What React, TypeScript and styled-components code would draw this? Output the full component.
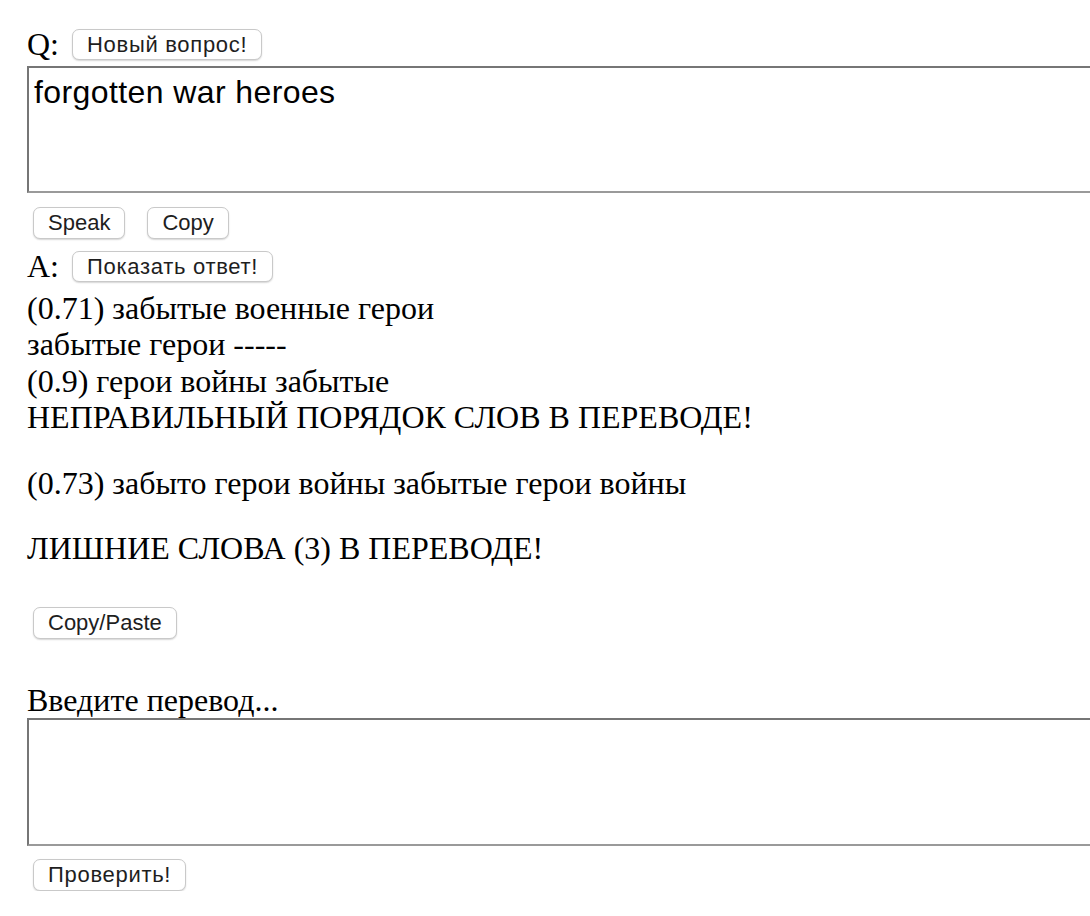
import React from "react";
import styled, { createGlobalStyle } from "styled-components";

const GlobalStyle = createGlobalStyle`
  html, body {
    margin: 0;
    padding: 0;
    overflow: hidden;
    background: #ffffff;
  }
  body {
    font-family: "Liberation Serif", "Times New Roman", serif;
    color: #000;
  }
`;

const Page = styled.main`
  display: flex;
  flex-direction: column;
  align-items: flex-start;
  padding: 26px 0 0 27px;
  font-size: 32px;
  line-height: 36.3px;
`;

const LabelRow = styled.div<{ $mt?: number }>`
  display: flex;
  align-items: center;
  gap: 13px;
  height: 37px;
  margin-top: ${(p) => p.$mt ?? 0}px;
`;

const Label = styled.span`
  font-family: "Liberation Serif", "Times New Roman", serif;
  font-size: 32px;
  line-height: 37px;
`;

const Button = styled.button<{ $mt?: number; $ml?: number; $cyr?: boolean }>`
  height: 32px;
  padding: 0 14px;
  margin-top: ${(p) => p.$mt ?? 0}px;
  margin-left: ${(p) => p.$ml ?? 0}px;
  font-family: "Liberation Sans", Arial, sans-serif;
  font-size: 22px;
  letter-spacing: ${(p) => (p.$cyr ? "0.7px" : "0")};
  color: #1e1e1e;
  background: #ffffff;
  border: 1px solid #c9c9c9;
  border-radius: 7px;
  box-shadow: 0 1px 1.5px rgba(0, 0, 0, 0.16);
  cursor: pointer;
`;

const SmallButton = styled(Button)`
  height: 31px;
`;

const TextArea = styled.textarea<{ $mt?: number; $h?: number }>`
  box-sizing: border-box;
  width: 1120px;
  height: ${(p) => p.$h ?? 127}px;
  margin-top: ${(p) => p.$mt ?? 0}px;
  padding: 6px 5px;
  font-family: "Liberation Sans", Arial, sans-serif;
  font-size: 32px;
  letter-spacing: 0.4px;
  color: #000;
  border-style: solid;
  border-width: 2px;
  border-color: #767676 #9a9a9a #9a9a9a #767676;
  resize: none;
  outline: none;
  background: #fff;
`;

const ButtonRow = styled.div`
  display: flex;
  gap: 22px;
  margin-top: 14px;
  margin-left: 6px;
`;

const Line = styled.div<{ $mt?: number }>`
  font-size: 32px;
  line-height: 36.3px;
  margin-top: ${(p) => p.$mt ?? 0}px;
  white-space: nowrap;
`;

const Prompt = styled.div`
  margin-top: 44px;
  font-size: 32px;
  line-height: 35.6px;
`;

export default function App() {
  return (
    <>
      <GlobalStyle />
      <Page>
        <LabelRow>
          <Label>Q:</Label>
          <SmallButton $cyr>Новый вопрос!</SmallButton>
        </LabelRow>
        <TextArea $mt={3} $h={127} defaultValue="forgotten war heroes" />
        <ButtonRow>
          <Button>Speak</Button>
          <Button>Copy</Button>
        </ButtonRow>
        <LabelRow $mt={9}>
          <Label>A:</Label>
          <SmallButton $cyr>Показать ответ!</SmallButton>
        </LabelRow>
        <Line $mt={5}>(0.71) забытые военные герои</Line>
        <Line>забытые герои -----</Line>
        <Line>(0.9) герои войны забытые</Line>
        <Line>НЕПРАВИЛЬНЫЙ ПОРЯДОК СЛОВ В ПЕРЕВОДЕ!</Line>
        <Line $mt={30}>(0.73) забыто герои войны забытые герои войны</Line>
        <Line $mt={29}>ЛИШНИЕ СЛОВА (3) В ПЕРЕВОДЕ!</Line>
        <Button $mt={40} $ml={6}>Copy/Paste</Button>
        <Prompt>Введите перевод...</Prompt>
        <TextArea $mt={0} $h={128} />
        <Button $mt={13} $ml={6} $cyr>Проверить!</Button>
      </Page>
    </>
  );
}
